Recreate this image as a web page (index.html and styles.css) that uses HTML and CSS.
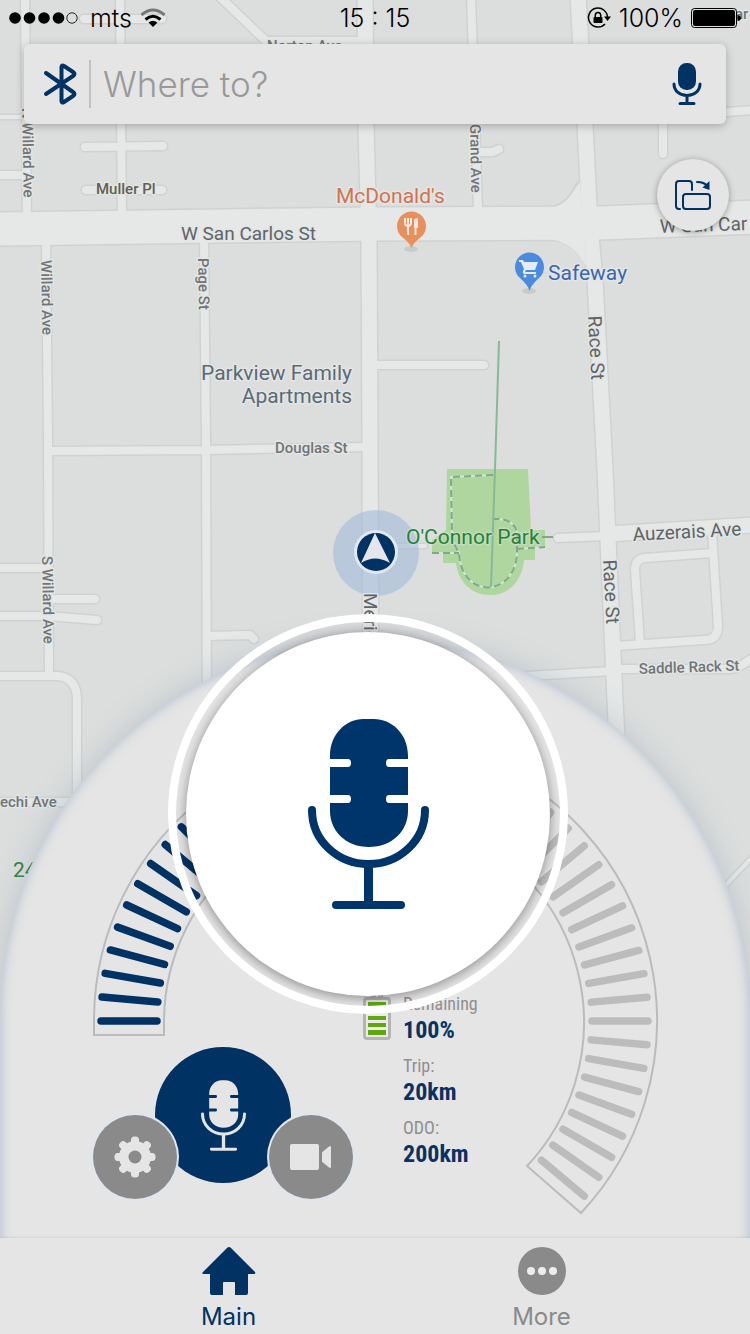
FILE: index.html
```html
<!DOCTYPE html>
<html lang="en">
<head>
<meta charset="utf-8">
<meta name="viewport" content="width=device-width, initial-scale=1">
<title>Ride map</title>
<link rel="stylesheet" href="styles.css">
</head>
<body>
<svg class="defs" aria-hidden="true">
  <symbol id="studio-mic" viewBox="307 720 121 190">
    <path fill="currentColor" d="M329 760V757C329 734 346 720 362 720H373C390 720 407 734 407 757V760H388Q385 760 385 764Q385 768 388 768H407V796H388Q385 796 385 800Q385 804 388 804H407V812C407 832 391 848 368 848C345 848 329 832 329 812V804H347Q350 804 350 800Q350 796 347 796H329V768H347Q350 768 350 764Q350 760 347 760Z"/>
    <path fill="none" stroke="currentColor" stroke-width="8" stroke-linecap="round" d="M311 811C311 842 337 865 367.500 865C398 865 424 842 424 811M335 906H400"/>
    <path fill="none" stroke="currentColor" stroke-width="9" d="M367.500 866V904"/>
  </symbol>
</svg>

<div class="app">
  <svg class="map" viewBox="0 0 750 1334" preserveAspectRatio="xMidYMin slice" role="img" aria-label="Street map">
    <defs>
      <g id="lanes">
        <path d="M25 -5L27 225M120 -5L122 225M84 19H162M85 147L163 146M86 190H162M0 175H25"/>
        <path d="M220 -3L266 41H360"/>
        <path d="M471 -5L478 210M480 152H493L499 149M663 110V154M727 112L755 110"/>
        <path d="M46 235L48 440L49 672M204 235L206 445L207 720M48 451L205 450L365 447M375 365H484"/>
        <path d="M-5 568H48M-5 616H48L97 620M48 599H95M207 636L250 635L254 639"/>
        <path d="M-5 676H58Q77 678 77 700V830M-5 802H80"/>
        <path d="M558 538L605 536M712 532L718 626Q718 640 704 640L615 646M712 553L645 558Q635 559 635 570L640 643"/>
        <path d="M510 677L612 671M615 669H730Q740 668 755 656"/>
      </g>
      <g id="avenues">
        <path d="M365 -5L366 125L369 240L370 440L371 720"/>
        <path d="M578 -5L585 125L590 225L595 280L605 470L615 700L618 760M608 534L755 525"/>
      </g>
      <path id="boulevard" d="M-5 229L375 224L600 223L755 217"/>
      <path id="alleys" d="M0 117H22M392 546H425M725 886L755 854"/>
    </defs>
    <rect width="750" height="1334" fill="#dcdedd"/>
    <g class="casing">
      <use href="#alleys" stroke-width="7"/>
      <use href="#lanes" stroke-width="11"/>
      <use href="#avenues" stroke-width="18"/>
      <use href="#boulevard" stroke-width="36"/>
      <path class="flare" d="M555 206Q564 203 570 195L578 182V254Q570 243 554 240Z"/>
    </g>
    <g class="surface">
      <use href="#alleys" stroke-width="4"/>
      <use href="#lanes" stroke-width="8"/>
      <use href="#avenues" stroke-width="15"/>
      <use href="#boulevard" stroke-width="33"/>
      <path class="flare-fill" d="M552 208Q564 205 571 195L580 182L586 266Q574 243 550 239Z"/>
    </g>

    <path fill="#afd69f" d="M447 469H528L531 530H545V548H535V560H524C522 582 508 595 490 595C472 595 458 582 456 563H443V553H432V540L446 530Z"/>
    <g fill="none" stroke="#d0e8cb" stroke-width="2">
      <path d="M493 475L451 477L452 540L459 553C461 600 516 598 517 552V538C518 524 508 518 493 519M432 553H459M517 549L545 547"/>
    </g>
    <g fill="none" stroke="#7fa988" stroke-width="2">
      <path stroke-dasharray="7 4" d="M493 475L451 477L452 540L459 553C461 600 516 598 517 552V538C518 524 508 518 493 519M432 553H459M517 549L545 547"/>
      <path stroke="#86b996" d="M499 341L495 469L491 587"/>
      <path d="M542 537H553"/>
    </g>

    <circle cx="376" cy="553" r="43" fill="#a2badb" fill-opacity=".6"/>
    <circle cx="376" cy="552" r="22" fill="#e2e8f2"/>
    <circle cx="376" cy="552" r="19" fill="#003264"/>
    <path fill="#e4e6ec" d="M375 533L390 563Q375 554 361 563Z"/>

    <g class="street small">
      <text transform="translate(22 108) rotate(89)">N Willard Ave</text>
      <text transform="translate(41 260) rotate(89)">Willard Ave</text>
      <text transform="translate(198 258) rotate(89)">Page St</text>
      <text transform="translate(42 556) rotate(89)">S Willard Ave</text>
      <text transform="translate(470 124) rotate(89)">Grand Ave</text>
      <text x="267" y="51">Norton Ave</text>
      <text class="olive" x="96" y="194">Muller Pl</text>
      <text x="275" y="453">Douglas St</text>
      <text x="0" y="807">echi Ave</text>
      <text x="735" y="19">ar</text>
      <text transform="translate(639 674) rotate(-2)">Saddle Rack St</text>
    </g>
    <g class="street large">
      <text x="181" y="240">W San Carlos St</text>
      <text transform="translate(660 233) rotate(-2)">W San Car</text>
      <text transform="translate(588 316) rotate(87)">Race St</text>
      <text transform="translate(603 560) rotate(87)">Race St</text>
      <text transform="translate(364 593) rotate(90)">Meridian Ave</text>
      <text transform="translate(633 541) rotate(-3)">Auzerais Ave</text>
    </g>
    <g class="place">
      <text class="food" x="336" y="203">McDonald's</text>
      <text class="shop" x="548" y="280">Safeway</text>
      <text class="home" x="352" y="380" text-anchor="end">Parkview Family</text>
      <text class="home" x="352" y="403" text-anchor="end">Apartments</text>
      <text class="park" x="406" y="544">O'Connor Park</text>
      <text class="park" x="13" y="877">24</text>
    </g>

    <ellipse cx="411" cy="249" rx="7" ry="3" fill="#c9cbcb"/>
    <path fill="#e8905b" d="M411.500 248Q410 243 402 237A14.500 14.500 0 1 1 421 237Q413 243 411.500 248Z"/>
    <path fill="none" stroke="#f3e8e0" stroke-width="2" d="M405 218V223Q405 226 408 226Q411 226 411 223V218M408 218V235M415.500 235V219"/>
    <path fill="#f3e8e0" d="M414 228V221Q414 218 418 218V228Z"/>
    <ellipse cx="529" cy="291" rx="7" ry="3" fill="#c9cbcb"/>
    <path fill="#4a8be0" d="M529.500 291Q528 285 520 278A14.500 14.500 0 1 1 539 278Q531 285 529.500 291Z"/>
    <path fill="#e4ecf6" d="M519 260H523L524 262H538L535 270H526L525 272H536V274H524Q522 273 523 271L524 269L521 262H519Z"/>
    <circle cx="525" cy="276" r="1.500" fill="#e4ecf6"/><circle cx="535" cy="276" r="1.500" fill="#e4ecf6"/>
  </svg>

  <header class="status">
    <div class="status-left">
      <svg width="70" height="14" viewBox="0 0 70 14" aria-hidden="true">
        <circle cx="7" cy="7" r="5.800"/><circle cx="21.500" cy="7" r="5.800"/><circle cx="36" cy="7" r="5.800"/><circle cx="50.500" cy="7" r="5.800"/>
        <circle cx="64" cy="7" r="5.200" fill="none" stroke="#222"/>
      </svg>
      <span>mts</span>
      <svg width="26" height="20" viewBox="0 0 26 20" aria-hidden="true">
        <path fill="none" stroke="#777" stroke-width="3" d="M1.500 7Q13 -3 24.500 7"/>
        <path fill="none" stroke="#000" stroke-width="3" d="M5.500 11.500Q13 5 20.500 11.500"/>
        <path d="M8.500 14.500Q13 11 17.500 14.500L13 19Z"/>
      </svg>
    </div>
    <time>15 : 15</time>
    <div class="status-right">
      <svg width="24" height="22" viewBox="0 0 24 22" aria-hidden="true">
        <path fill="none" stroke="#000" stroke-width="1.500" d="M18 17A9.500 9.500 0 1 1 20.500 11"/>
        <path d="M17 9.500H24L20.500 14Z"/>
        <rect x="6.500" y="10" width="9" height="6" rx="1"/>
        <path fill="none" stroke="#000" stroke-width="1.500" d="M8.300 10V8Q8.500 5.500 11 5.500Q13.500 5.500 13.700 8V10"/>
      </svg>
      <span>100%</span>
      <svg width="51" height="20" viewBox="0 0 51 20" aria-hidden="true">
        <rect x=".5" y=".5" width="45" height="19" rx="3" fill="none" stroke="#000"/>
        <rect x="2" y="2" width="42" height="16" rx="2"/>
        <path d="M46.500 7Q50 7.500 50 10Q50 12.500 46.500 13Z"/>
      </svg>
    </div>
  </header>

  <form class="search">
    <button type="button" class="icon-button" aria-label="Bluetooth">
      <svg width="36" height="44" viewBox="42 62 36 44" aria-hidden="true">
        <path fill="none" stroke="#003264" stroke-width="4" stroke-linecap="round" stroke-linejoin="round" d="M46 73L73 92Q76 94 73 96L64 102Q61.500 103.500 61.500 101V67Q61.500 64.500 64 66L73 72Q76 74 73 76L46 94"/>
      </svg>
    </button>
    <input class="search-input" type="text" placeholder="Where to?" aria-label="Where to?">
    <button type="button" class="icon-button" aria-label="Voice search">
      <svg width="30" height="44" viewBox="672 62 30 44" aria-hidden="true">
        <rect x="678" y="63" width="18" height="27" rx="8.500" fill="#003264"/>
        <path fill="none" stroke="#003264" stroke-width="3" stroke-linecap="round" d="M674 84C674 91 680 95.500 687 95.500C694 95.500 700 91 700 84M687 96V103M680 103.500H694"/>
      </svg>
    </button>
  </form>

  <button type="button" class="rotate" aria-label="Rotate screen">
    <svg width="38" height="32" viewBox="674 179 38 32" aria-hidden="true">
      <g fill="none" stroke="#003264" stroke-width="2" stroke-linecap="round">
        <path d="M680 209H679Q676 209 676 206V184Q676 181 679 181H689Q692 181 692 184V190"/>
        <rect x="683" y="194" width="27" height="15" rx="3"/>
        <path d="M697 182Q705 182 708 187"/>
      </g>
      <path fill="#003264" d="M709.500 181V190L702.500 187.500Z"/>
    </svg>
  </button>

  <main class="panel">
    <svg class="gauge" height="598" viewBox="0 640 750 598" preserveAspectRatio="xMidYMin meet" role="img" aria-label="Power gauge">
      <defs>
        <path id="tl" d="M101 1021H157"/>
        <path id="tr" d="M592 1021H648"/>
      </defs>
      <path fill="none" stroke="#b9bcbe" stroke-width="2" d="M94 1035V1021A281.500 281.500 0 1 1 581 1213L527 1166A210 210 0 1 0 164 1021V1035Z"/>
      <g stroke="#003264" stroke-width="7.500" stroke-linecap="round">
        <use href="#tl"/>
        <use href="#tl" transform="rotate(5 375.500 1021)"/>
        <use href="#tl" transform="rotate(10 375.500 1021)"/>
        <use href="#tl" transform="rotate(15 375.500 1021)"/>
        <use href="#tl" transform="rotate(20 375.500 1021)"/>
        <use href="#tl" transform="rotate(25 375.500 1021)"/>
        <use href="#tl" transform="rotate(30 375.500 1021)"/>
        <use href="#tl" transform="rotate(35 375.500 1021)"/>
        <use href="#tl" transform="rotate(40 375.500 1021)"/>
        <use href="#tl" transform="rotate(45 375.500 1021)"/>
      </g>
      <g stroke="#bcbcbc" stroke-width="7.500" stroke-linecap="round">
        <use href="#tr" transform="rotate(-50 375.500 1021)"/>
        <use href="#tr" transform="rotate(-45 375.500 1021)"/>
        <use href="#tr" transform="rotate(-40 375.500 1021)"/>
        <use href="#tr" transform="rotate(-35 375.500 1021)"/>
        <use href="#tr" transform="rotate(-30 375.500 1021)"/>
        <use href="#tr" transform="rotate(-25 375.500 1021)"/>
        <use href="#tr" transform="rotate(-20 375.500 1021)"/>
        <use href="#tr" transform="rotate(-15 375.500 1021)"/>
        <use href="#tr" transform="rotate(-10 375.500 1021)"/>
        <use href="#tr" transform="rotate(-5 375.500 1021)"/>
        <use href="#tr"/>
        <use href="#tr" transform="rotate(5 375.500 1021)"/>
        <use href="#tr" transform="rotate(10 375.500 1021)"/>
        <use href="#tr" transform="rotate(15 375.500 1021)"/>
        <use href="#tr" transform="rotate(20 375.500 1021)"/>
        <use href="#tr" transform="rotate(25 375.500 1021)"/>
        <use href="#tr" transform="rotate(30 375.500 1021)"/>
        <use href="#tr" transform="rotate(35 375.500 1021)"/>
        <use href="#tr" transform="rotate(40 375.500 1021)"/>
      </g>
    </svg>

    <div class="readout">
      <div class="controls">
        <button type="button" class="round" aria-label="Settings">
          <svg width="42" height="42" viewBox="-21 -21 42 42" aria-hidden="true">
            <g fill="#e5e5e5">
              <circle r="16"/>
              <g id="teeth"><rect x="-4" y="-20.500" width="8" height="41" rx="3.500"/><rect x="-20.500" y="-4" width="41" height="8" rx="3.500"/></g>
              <use href="#teeth" transform="rotate(45)"/>
            </g>
            <circle r="6.500" fill="#8a8a8a"/>
          </svg>
        </button>
        <button type="button" class="round primary" aria-label="Voice control">
          <svg width="45" height="71" aria-hidden="true"><use href="#studio-mic"/></svg>
        </button>
        <button type="button" class="round" aria-label="Camera">
          <svg width="42" height="26" viewBox="0 0 42 26" aria-hidden="true">
            <rect width="29" height="26" rx="2" fill="#e5e5e5"/>
            <path fill="#e5e5e5" d="M32 9Q32 8 33 7.500L39 2.500Q41 1.500 41 3V23Q41 24.500 39 23.500L33 18.500Q32 18 32 17Z"/>
          </svg>
        </button>
      </div>
      <svg class="charge" width="28" height="46" viewBox="0 0 28 46" aria-hidden="true">
        <path fill="#b4b4b4" d="M8 0H13V4H8ZM15 0H20V4H15Z"/>
        <rect x="1.500" y="3.500" width="25" height="40" rx="2.500" fill="#eceaec" stroke="#b4b4b4" stroke-width="3"/>
        <path fill="#5fa80f" d="M5 7H23V11H5ZM5 14H23V18H5ZM5 21H23V25H5ZM5 28H23V32H5ZM5 35H23V40H5Z"/>
      </svg>
      <dl class="stats">
        <div><dt>Remaining</dt><dd>100%</dd></div>
        <div><dt>Trip:</dt><dd>20km</dd></div>
        <div><dt>ODO:</dt><dd>200km</dd></div>
      </dl>
    </div>

    <button type="button" class="voice" aria-label="Speak">
      <span class="voice-disc">
        <svg width="121" height="190" aria-hidden="true"><use href="#studio-mic"/></svg>
      </span>
    </button>
  </main>

  <nav class="tabs">
    <a class="tab active" href="#main">
      <svg width="56" height="48" viewBox="0 0 56 48" aria-hidden="true">
        <path fill="currentColor" d="M26 1Q28 -1 30 1L54 25Q55 27 53 27H47V46Q47 48 45 48H34V36Q34 35 33 35H23Q22 35 22 36V48H11Q9 48 9 46V27H3Q0 27 2 25Z"/>
      </svg>
      <span>Main</span>
    </a>
    <a class="tab" href="#more">
      <svg width="48" height="48" viewBox="0 0 48 48" aria-hidden="true">
        <circle cx="24" cy="24" r="24" fill="#8a8a8a"/>
        <g fill="#ededed"><circle cx="13" cy="24" r="4"/><circle cx="24" cy="24" r="4"/><circle cx="35" cy="24" r="4"/></g>
      </svg>
      <span>More</span>
    </a>
  </nav>
</div>
</body>
</html>
```
FILE: styles.css
```css
* { box-sizing: border-box; }

body {
  margin: 0;
  font-family: Inter, "Liberation Sans", sans-serif;
  color: #000;
  background: #dcdedd;
}

button {
  padding: 0;
  border: 0;
  background: none;
  cursor: pointer;
}

svg { display: block; }

.defs { position: absolute; width: 0; height: 0; }

.app {
  position: relative;
  display: flex;
  flex-direction: column;
  min-height: 100vh;
  overflow: hidden;
  isolation: isolate;
}

/* Map backdrop */
.map {
  position: absolute;
  inset: 0;
  z-index: -1;
  width: 100%;
  height: 100%;
  font-family: Roboto, "Liberation Sans", sans-serif;
}

.casing,
.surface { fill: none; stroke-linecap: round; stroke-linejoin: round; }
.casing { stroke: #cfd2d1; }
.surface { stroke: #e5e8e7; }
.flare { stroke-width: 2; }
.flare-fill { fill: #e5e8e7; stroke: none; }

.map text {
  paint-order: stroke;
  stroke: #e3e6e5;
  stroke-width: 3px;
  stroke-linejoin: round;
}

.street { fill: #5f6467; }
.small { font-size: 15px; font-weight: 500; fill: #717576; }
.small .olive { fill: #605f50; }
.large { font-size: 19px; }
.place { font-size: 21px; }
.food { fill: #cf7350; }
.shop { fill: #3b67ad; }
.home { fill: #5b6b76; }
.park { fill: #24823a; }
.map .park { stroke-opacity: .4; }

/* Status bar */
.status {
  display: grid;
  grid-template-columns: 1fr auto 1fr;
  align-items: center;
  height: 36px;
  padding: 0 8px;
  font-size: 25px;
  font-weight: 300;
}

.status-left,
.status-right { display: flex; align-items: center; }
.status-left { gap: 12px; }
.status-left span + svg { margin-left: -4px; }
.status-right { justify-content: flex-end; gap: 8px; }

/* Search */
.search {
  display: flex;
  align-items: center;
  height: 80px;
  margin: 8px 24px 0;
  padding: 0 24px 0 18px;
  border-radius: 6px;
  background: #e5e5e5;
  box-shadow: 0 2px 8px rgba(0, 0, 0, .25);
}

.search-input {
  flex: 1;
  min-width: 0;
  height: 48px;
  margin-left: 11px;
  padding: 0 12px;
  border: 0;
  border-left: 2px solid #c2c2c2;
  background: none;
  font: 300 35px Inter, "Liberation Sans", sans-serif;
  color: #333;
  outline: none;
}

.search-input::placeholder { color: #999; opacity: 1; }

.rotate {
  display: grid;
  place-items: center;
  align-self: flex-end;
  width: 72px;
  height: 72px;
  margin: 35px 21px 0 0;
  border-radius: 50%;
  background: #e5e5e5;
  box-shadow: 0 1px 6px rgba(0, 0, 0, .35);
}

/* Dashboard; its lower edge runs on under the tab bar */
.panel {
  position: relative;
  display: grid;
  margin-top: auto;
  margin-bottom: -16px;
  padding-bottom: 16px;
  border-radius: 50vw 50vw 0 0;
  background: #e5e5e5;
  box-shadow: 0 0 28px rgba(130, 145, 175, .35), inset 0 0 12px rgba(115, 145, 185, .5);
}

.gauge,
.readout { grid-area: 1 / 1; width: 100%; }

.readout {
  display: flex;
  align-items: flex-start;
  padding: 351px 0 39px calc(50% - 282px);
}

.controls {
  display: flex;
  align-items: flex-end;
  margin: 56px 10px 0 0;
}

.round {
  position: relative;
  z-index: 1;
  display: grid;
  place-items: center;
  width: 84px;
  height: 84px;
  border-radius: 50%;
  background: #8a8a8a;
  box-shadow: 0 0 0 2px #dfe6ef;
}

.primary {
  z-index: 0;
  width: 136px;
  height: 136px;
  margin: 0 -22px 16px;
  background: #003264;
  color: #e5e5e5;
  box-shadow: none;
}

.charge { margin: 4px 12px 0 0; }

.stats {
  display: grid;
  gap: 10px;
  margin: 0;
  font-family: "Roboto Condensed", Roboto, "Liberation Sans", sans-serif;
  line-height: 26px;
}

.stats dt { font-size: 18px; color: #8f8f8f; }
.stats dd { margin: 0; font-size: 24px; font-weight: 700; color: #0b3161; }

.voice {
  position: absolute;
  z-index: 2;
  top: -26px;
  left: calc(50% - 207px);
  display: grid;
  place-items: center;
  width: 400px;
  height: 400px;
  border: 8px solid #fff;
  border-radius: 50%;
  overflow: hidden;
}

.voice-disc {
  display: grid;
  place-items: center;
  width: 364px;
  height: 364px;
  border-radius: 50%;
  background: #fff;
  color: #00356b;
  box-shadow: 0 2px 12px rgba(0, 0, 0, .4);
}

/* Tab bar */
.tabs {
  position: relative;
  z-index: 1;
  display: grid;
  grid-template-columns: 1fr 1fr;
  height: 96px;
  padding: 9px 52px 0 72px;
  background: #e5e5e5;
  box-shadow: 0 -1px 2px rgba(0, 0, 0, .08);
}

.tab {
  display: flex;
  flex-direction: column;
  align-items: center;
  gap: 7px;
  font-size: 24px;
  line-height: 30px;
  color: #8a8a8a;
  text-decoration: none;
}

.active { color: #003264; }
```
